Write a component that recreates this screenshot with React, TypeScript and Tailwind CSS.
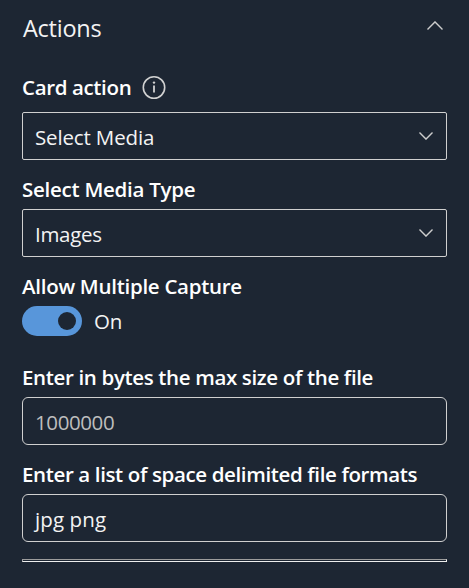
import type { ReactNode } from "react";

const Chevron = ({ up = false, size }: { up?: boolean; size: number }) => (
  <svg
    width={size}
    height={size / 2 + 1}
    viewBox={up ? "0 0 16 9" : "0 0 14 8"}
    fill="none"
    stroke="#cdcdcd"
    strokeWidth="1.4"
  >
    <path d={up ? "M0.5 8.4L8 0.9L15.5 8.4" : "M0.5 0.6L7 7.1L13.5 0.6"} />
  </svg>
);

const Label = ({ children, tracking }: { children: ReactNode; tracking: string }) => (
  <div className={`h-[30px] whitespace-nowrap text-[20.5px] leading-[31px] font-semibold text-white ${tracking}`}>
    {children}
  </div>
);

const Select = ({ value, tracking }: { value: string; tracking: string }) => (
  <div className="flex h-12 items-center justify-between rounded-[2px] border border-[#d0d0d0] pr-[13px] pl-3">
    <span className={`pt-[2px] text-[20.5px] leading-[30px] text-[#f3f3f3] ${tracking}`}>{value}</span>
    <Chevron size={14} />
  </div>
);

const Field = ({ value, style }: { value: string; style: string }) => (
  <div className="flex h-12 items-center rounded-[6px] border border-[#d0d0d0] pl-3">
    <span className={`pt-px text-[20.5px] leading-[30px] ${style}`}>{value}</span>
  </div>
);

export default function App() {
  return (
    <main className="h-[588px] w-[469px] bg-[#1d2633] pr-[22px] pl-[22px] font-['Open_Sans','Noto_Sans',sans-serif]">
      <header className="flex h-[72px] items-start justify-between pt-[11px] pr-1 pl-px">
        <h1 className="text-[23.5px] leading-[34px] tracking-[-0.25px] text-[#f3f3f3]">Actions</h1>
        <div className="pt-[10px]">
          <Chevron up size={16} />
        </div>
      </header>

      <div className="flex h-10 items-start">
        <div className="w-[120px]">
          <Label tracking="tracking-[-0.36px]">Card action</Label>
        </div>
        <svg className="mt-[3px]" width="24" height="24" viewBox="0 0 24 24" fill="none">
          <circle cx="12" cy="12.5" r="10.7" stroke="#d2d2d2" strokeWidth="1.6" />
          <path d="M12 10.5V17.5" stroke="#d2d2d2" strokeWidth="1.8" />
          <circle cx="12" cy="7.6" r="1.2" fill="#d2d2d2" />
        </svg>
      </div>
      <Select value="Select Media" tracking="tracking-[-0.15px]" />

      <div className="pt-[14px] pb-[5px]">
        <Label tracking="tracking-[-0.26px]">Select Media Type</Label>
      </div>
      <Select value="Images" tracking="tracking-[-0.3px]" />

      <div className="pt-[14px] pb-[5px]">
        <Label tracking="tracking-[-0.28px]">Allow Multiple Capture</Label>
      </div>
      <div className="flex h-[30px] items-center">
        <div className="flex h-[30px] w-[60px] items-center justify-end rounded-full bg-[#5896da] pr-[6px]">
          <div className="size-[18px] rounded-full bg-[#1d2633]" />
        </div>
        <span className="pl-3 text-[20.5px] leading-[30px] tracking-[-0.3px] text-[#f3f3f3]">On</span>
      </div>

      <div className="pt-[26px] pb-[5px]">
        <Label tracking="tracking-[-0.35px]">Enter in bytes the max size of the file</Label>
      </div>
      <Field value="1000000" style="text-[#bebebe] tracking-[-0.4px]" />

      <div className="pt-[14px] pb-[5px]">
        <Label tracking="tracking-[-0.37px]">Enter a list of space delimited file formats</Label>
      </div>
      <Field value="jpg png" style="text-[#f3f3f3] tracking-[0.1px]" />

      <div className="mt-[17px] h-[3px] border border-t-[#9c9c9c] border-r-[#eeeeee] border-b-[#eeeeee] border-l-[#9c9c9c]" />
    </main>
  );
}
